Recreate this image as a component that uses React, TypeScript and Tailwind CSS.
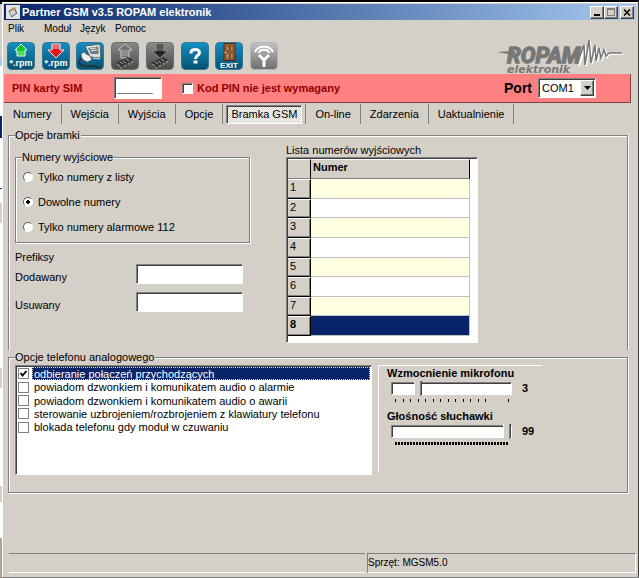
import { useState } from "react";
import type { ReactNode } from "react";

const TABS = ["Numery", "Wejścia", "Wyjścia", "Opcje", "Bramka GSM", "On-line", "Zdarzenia", "Uaktualnienie"];

const OUT_MODES = ["Tylko numery z listy", "Dowolne numery", "Tylko numery alarmowe 112"];

const PHONE_OPTIONS = [
  "odbieranie połączeń przychodzących",
  "powiadom dzwonkiem i komunikatem audio o alarmie",
  "powiadom dzwonkiem i komunikatem audio o awarii",
  "sterowanie uzbrojeniem/rozbrojeniem z klawiatury telefonu",
  "blokada telefonu gdy moduł w czuwaniu",
];

const MIC_TICKS = [0, 1, 2, 3, 4, 5, 6, 7, 8, 9, 10, 11, 12, 15];

const SUNKEN = "border border-t-[#808080] border-l-[#808080] border-r-white border-b-white shadow-[inset_1px_1px_0_#404040]";
const RAISED = "bg-[#d4d0c8] border border-t-white border-l-white border-r-[#404040] border-b-[#404040] shadow-[inset_-1px_-1px_0_#808080]";

/* ---------- toolbar icons, 28x28 ---------- */

function Tile({ kind, children }: { kind: "blue" | "gray" | "silver"; children: ReactNode }) {
  const top = { blue: "#1590c4", gray: "#8a8a8a", silver: "#c4c4c4" }[kind];
  const bottom = { blue: "#07506f", gray: "#4a4a4a", silver: "#6c6c6c" }[kind];
  const edge = { blue: "#2f7898", gray: "#6e6e6e", silver: "#b4b4b4" }[kind];
  return (
    <svg viewBox="0 0 28 28" className="block size-7">
      <defs>
        <linearGradient id={`tile-${kind}`} x1="0" y1="0" x2="0" y2="1">
          <stop offset="0" stopColor={top} />
          <stop offset="1" stopColor={bottom} />
        </linearGradient>
      </defs>
      <rect x="0.5" y="0.5" width="27" height="27" rx="4" fill={`url(#tile-${kind})`} stroke={edge} />
      {children}
    </svg>
  );
}

function Rpm() {
  return (
    <text x="14" y="24" textAnchor="middle" fontFamily="Liberation Sans, sans-serif" fontWeight="700" fontSize="9" fill="#fff">
      *.rpm
    </text>
  );
}

function Chip({ y }: { y: number }) {
  return (
    <g transform={`translate(0 ${y})`}>
      <path d="M5 6 L17 0 L22 3 L10 10 Z" fill="#333" />
      <path d="M6 7l3 2M9 5l3 2M12 4l3 2M15 2l3 2M10 10v2M14 8v2M18 6v2M21 4v2" stroke="#aaa" strokeWidth="1" />
    </g>
  );
}

const TOOLS: { name: string; icon: ReactNode }[] = [
  {
    name: "Otwórz",
    icon: (
      <Tile kind="blue">
        <path d="M14 2 L20 8 H18 V14 H10 V8 H8 Z" fill="#12c62c" stroke="#e8ffe8" strokeWidth="1" />
        <path d="M10 10H18M10 12H18" stroke="#e8ffe8" strokeWidth="0.6" />
        <Rpm />
      </Tile>
    ),
  },
  {
    name: "Zapisz",
    icon: (
      <Tile kind="blue">
        <path d="M10 2 H18 V8 H22 L14 16 L6 8 H10 Z" fill="#dc1420" stroke="#ffe4e4" strokeWidth="1" />
        <path d="M10 4H18M10 6H18" stroke="#ffe4e4" strokeWidth="0.8" />
        <Rpm />
      </Tile>
    ),
  },
  {
    name: "Połącz",
    icon: (
      <Tile kind="blue">
        <path d="M9 4 L24 2 L25 16 L14 15 Z" fill="#dcdcdc" stroke="#444" strokeWidth="0.8" />
        <path d="M12 6 L22 4.5 L22.5 12 L15 12 Z" fill="#6d797f" />
        <path d="M14 7l6-1M15 9l6-1M17 16l7 1" stroke="#fff" strokeWidth="0.9" />
        <path d="M5 12 L8 10 L10 12 L14 14 L16 18 L11 20 L6 17 Z" fill="#efefef" stroke="#555" strokeWidth="0.7" />
        <path d="M6 16 C0 20 4 25 13 24 C19 23 22 25 25 26" fill="none" stroke="#26333a" strokeWidth="1.8" />
      </Tile>
    ),
  },
  {
    name: "Odczytaj z modułu",
    icon: (
      <Tile kind="gray">
        <path d="M14 2 L21 8 H18 V16 H10 V8 H7 Z" fill="#737373" stroke="#c4c4c4" strokeWidth="1" />
        <path d="M10 9H18M10 11H18M10 13H18" stroke="#b4b4b4" strokeWidth="0.8" />
        <Chip y={15} />
      </Tile>
    ),
  },
  {
    name: "Zapisz do modułu",
    icon: (
      <Tile kind="gray">
        <path d="M10 2 H18 V9 H22 L14 16 L6 9 H10 Z" fill="#252525" stroke="#9c9c9c" strokeWidth="0.8" />
        <path d="M10 4H18M10 6H18M10 8H18" stroke="#aaa" strokeWidth="0.8" />
        <Chip y={15} />
      </Tile>
    ),
  },
  {
    name: "Pomoc",
    icon: (
      <Tile kind="blue">
        <path
          d="M10 11.5 V10.500 C10 8.500 12 7.500 14.500 7.500 C17 7.500 18.500 9 18.500 10.500 C18.500 13.500 14.500 13 14.500 17"
          fill="none"
          stroke="#fff"
          strokeWidth="3"
        />
        <rect x="12.500" y="18.500" width="4" height="3" fill="#fff" />
      </Tile>
    ),
  },
  {
    name: "Wyjście",
    icon: (
      <Tile kind="blue">
        <rect x="9" y="1.500" width="11" height="17" fill="#9a6038" stroke="#4b2a14" strokeWidth="1" />
        <path d="M11 4H14V9H11ZM15.500 4H18V9H15.500ZM11 11H14V17H11ZM15.500 11H18V17H15.500Z" fill="#c58d5c" stroke="#5b341b" strokeWidth="0.6" />
        <circle cx="10.500" cy="10.500" r="0.800" fill="#fff" />
        <text x="14" y="26" textAnchor="middle" fontFamily="Liberation Sans, sans-serif" fontWeight="700" fontSize="8" fill="#fff">
          EXIT
        </text>
      </Tile>
    ),
  },
  {
    name: "Zasięg",
    icon: (
      <Tile kind="silver">
        <path d="M5 10 C8 3 20 3 23 10M8.500 11 C10 6.500 18 6.500 19.500 11" fill="none" stroke="#fff" strokeWidth="2" />
        <path d="M9 13 L14 18 L19 13 M14 17 V25" fill="none" stroke="#fff" strokeWidth="3" />
      </Tile>
    ),
  },
];

function Logo() {
  return (
    <svg viewBox="0 0 126 36" className="block h-9 w-[126px]" role="img" aria-label="ROPAM elektronik">
      <g fill="none">
        <path
          d="M81 27 L87 7 L88 27 L92 2 L94 25 L98 7 L99 23 L102 10 L104 20 L107 12 L109 18 L112 15 L125 15"
          stroke="#fff"
          strokeWidth="2"
          transform="translate(1 1)"
        />
        <path d="M80 26 L87 7 L88 27 L92 2 L94 25 L98 7 L99 23 L102 10 L104 20 L107 12 L109 18 L112 15 L125 15" stroke="#777" strokeWidth="1.500" />
      </g>
      <path d="M0 14 L18 13 V17 Z" fill="#777" />
      <g fontStyle="italic" fontWeight="700" fill="#777">
        <text x="10" y="25" fontFamily="Roboto, sans-serif" fontSize="22" stroke="#777" strokeWidth="1.400">
          ROPAM
        </text>
        <text x="10" y="35" fontFamily="DejaVu Sans, sans-serif" fontSize="11">
          elektronik
        </text>
      </g>
    </svg>
  );
}

/* ---------- form parts ---------- */

function Group({ title, className, children }: { title: string; className: string; children: ReactNode }) {
  return (
    <fieldset className={`min-w-0 border-[#808080] ${className}`}>
      <legend className="ml-1.5 bg-[#d4d0c8] pr-px leading-[14px]">{title}</legend>
      {children}
    </fieldset>
  );
}

function Slider({ label, max, value, onChange, children }: {
  label: string;
  max: number;
  value: number;
  onChange: (v: number) => void;
  children: ReactNode;
}) {
  return (
    <label className="block pb-[7px] font-bold leading-[14px]">
      {label}
      <span className="mt-0.5 flex items-start gap-2.5 pl-1">
        <span className="block w-[121px]">
          <input
            type="range"
            min={0}
            max={max}
            value={value}
            onChange={(e) => onChange(Number(e.target.value))}
            className="relative block h-[13px] w-full appearance-none border border-t-[#808080] border-l-[#808080] border-r-white border-b-white bg-white shadow-[inset_1px_1px_0_#404040] [&::-webkit-slider-runnable-track]:h-[11px] [&::-webkit-slider-thumb]:-mt-0.5 [&::-webkit-slider-thumb]:h-[17px] [&::-webkit-slider-thumb]:w-2 [&::-webkit-slider-thumb]:appearance-none [&::-webkit-slider-thumb]:bg-[linear-gradient(to_right,#fff_1px,#d4d0c8_1px,#d4d0c8_6px,#808080_6px,#808080_7px,#404040_7px)] [&::-webkit-slider-thumb]:[clip-path:polygon(0_0,100%_0,100%_80%,50%_100%,0_80%)]"
          />
          {children}
        </span>
        <output className="leading-[13px]">{value}</output>
      </span>
    </label>
  );
}

/* sliver of the desktop behind the window */
function Backdrop() {
  return (
    <div className="flex w-0.5 shrink-0 flex-col bg-white" aria-hidden="true">
      <div className="h-1 bg-black" />
      <div className="h-[54px] bg-[#d4d0c8]" />
      <div className="h-2 bg-[#a6caf0]" />
      <div className="mt-[50px] h-[22px] bg-[#0a246a]" />
      <div className="mt-[50px] h-px bg-[#0a246a]" />
      <div className="mt-3.5 h-5 bg-[#d4d0c8]" />
      <div className="mt-[145px] h-5 bg-[#d4d0c8]" />
      <div className="mt-[98px] h-4 bg-[#d4d0c8]" />
      <div className="mt-9 flex-1 bg-[#b4a090]" />
    </div>
  );
}

export default function App() {
  const [tab, setTab] = useState(4);
  const [mode, setMode] = useState(1);
  const [checked, setChecked] = useState([true, false, false, false, false]);
  const [mic, setMic] = useState(3);
  const [volume, setVolume] = useState(99);

  return (
    <div className="flex min-h-screen font-['Liberation_Sans',sans-serif] text-[11px] leading-[14px] text-black">
      <Backdrop />
      <div className="flex min-w-0 flex-1 flex-col border-t-2 border-r border-b border-t-black border-r-[#404040] border-b-[#808080] bg-[#d4d0c8]">
        <div className="flex flex-1 flex-col border-t border-l border-white pt-px pl-px">
          {/* title bar */}
          <header className="mr-0.5 flex h-4 items-center gap-0.5 bg-linear-to-r from-[#0a246a] to-[#a6caf0] pr-0.5 pl-0.5">
            <svg viewBox="0 0 14 14" className="size-3.5">
              <rect width="14" height="14" fill="#e4e4e4" />
              <path d="M3 6 L8 3 L11 8 L6 12 Z" fill="#bbb" stroke="#666" />
              <path d="M7 6l1 3M5 7l1 3" stroke="#fff" />
              <path d="M8 2 L10 3 L9 5 L7 4 Z" fill="#e08a2a" />
            </svg>
            <h1 className="flex-1 font-bold text-white">Partner GSM v3.5 ROPAM elektronik</h1>
            <div className="flex">
              <button aria-label="Minimalizuj" className={`flex h-[13px] w-3.5 items-end justify-center pb-0.5 ${RAISED}`}>
                <span className="block h-0.5 w-1.5 bg-black" />
              </button>
              <button aria-label="Maksymalizuj" className={`flex h-[13px] w-3.5 items-center justify-center ${RAISED}`}>
                <span className="block size-2 border border-t-2 border-[#808080]" />
              </button>
              <button aria-label="Zamknij" className={`ml-0.5 flex h-[13px] w-3.5 items-center justify-center ${RAISED}`}>
                <svg viewBox="0 0 8 7" className="h-[7px] w-2">
                  <path d="M1 0.500 L7 6.500 M7 0.500 L1 6.500" stroke="#000" strokeWidth="1.500" />
                </svg>
              </button>
            </div>
          </header>

          <nav className="flex h-[18px] items-center pl-1 text-[10px]">
            <button className="w-9 text-left">Plik</button>
            <button className="w-9 text-left">Moduł</button>
            <button className="w-[35px] text-left">Język</button>
            <button>Pomoc</button>
          </nav>

          <div className="flex h-9 items-center justify-between pr-[15px] pl-[3px]">
            <div className="flex w-[271px] justify-between">
              {TOOLS.map((t) => (
                <button key={t.name} aria-label={t.name}>
                  {t.icon}
                </button>
              ))}
            </div>
            <Logo />
          </div>

          {/* SIM / port bar */}
          <div className="mr-[7px] flex h-[29px] items-center border-r border-b border-[#804040] bg-[#ff8080] pr-[34px] pl-2 font-bold text-[#900000]">
            <label htmlFor="pin" className="w-[102px]">PIN karty SIM</label>
            <input
              id="pin"
              defaultValue="____"
              className={`h-[22px] w-12 bg-white pb-0.5 pl-0.5 text-[16px] leading-[16px] font-bold text-black ${SUNKEN}`}
            />
            <label className="ml-5 flex items-center gap-1">
              <input type="checkbox" className={`size-[11px] appearance-none bg-white checked:bg-[#404040] ${SUNKEN}`} />
              Kod PIN nie jest wymagany
            </label>
            <label htmlFor="port" className="mr-1.5 ml-auto text-[14px] text-black">Port</label>
            <div className="relative">
              <select
                id="port"
                className={`block h-5 w-[58px] appearance-none bg-white pl-[3px] text-[11px] font-normal text-black ${SUNKEN}`}
              >
                <option>COM1</option>
                <option>COM2</option>
              </select>
              <span className={`pointer-events-none absolute top-0.5 right-0.5 flex h-4 w-3.5 items-center justify-center ${RAISED}`}>
                <svg viewBox="0 0 7 4" className="h-1 w-[7px]">
                  <path d="M0 0 H7 L3.500 4 Z" />
                </svg>
              </span>
            </div>
          </div>

          {/* tabs */}
          <div className="flex h-[22px] items-center" role="tablist">
            {TABS.map((name, i) => (
              <div key={name} className="flex h-5 items-center border-r border-[#808080] px-[3px]">
                <button
                  role="tab"
                  aria-selected={tab === i}
                  onClick={() => setTab(i)}
                  className={
                    tab === i
                      ? `h-[19px] bg-[conic-gradient(#fff_25%,#d4d0c8_0_50%,#fff_0_75%,#d4d0c8_0)] bg-size-[2px_2px] px-1 ${SUNKEN}`
                      : "h-[19px] px-1.5"
                  }
                >
                  {name}
                </button>
              </div>
            ))}
          </div>

          <main className="mt-[3px] mr-[10px] ml-1">
            <Group title="Opcje bramki" className="border-x border-t pb-[7px] shadow-[1px_0_0_#fff,inset_1px_1px_0_#fff]">
              <div className="flex gap-9 pl-1.5">
                <div className="w-[235px] pt-2">
                  <Group title="Numery wyjściowe" className="border pb-[3px] shadow-[1px_1px_0_#fff,inset_1px_1px_0_#fff]">
                    {OUT_MODES.map((m, i) => (
                      <label key={m} className="flex h-[25px] items-center gap-[5px] pl-[7px]">
                        <input
                          type="radio"
                          name="mode"
                          checked={mode === i}
                          onChange={() => setMode(i)}
                          className="size-2.5 appearance-none rounded-full border border-t-[#606060] border-l-[#606060] border-r-white border-b-white bg-white checked:bg-[radial-gradient(#000_2px,#fff_2px)]"
                        />
                        {m}
                      </label>
                    ))}
                  </Group>
                  <p className="mt-[7px]">Prefiksy</p>
                  <label className="flex items-end">
                    <span className="w-[121px]">Dodawany</span>
                    <input className={`h-5 w-[107px] bg-white px-1 ${SUNKEN}`} />
                  </label>
                  <label className="mt-2 flex items-end">
                    <span className="w-[121px]">Usuwany</span>
                    <input className={`h-5 w-[107px] bg-white px-1 ${SUNKEN}`} />
                  </label>
                </div>

                <div className="w-48 pt-px">
                  <p id="out-list">Lista numerów wyjściowych</p>
                  <div className={`h-[186px] bg-white pt-px pl-px ${SUNKEN}`}>
                    <table aria-labelledby="out-list" className="h-[177px] w-[182px] border-separate border-spacing-0 text-left">
                      <thead>
                        <tr className="h-5">
                          <th className="w-[23px] border-t border-r border-b border-t-white border-r-black border-b-[#808080] bg-[#d4d0c8]" />
                          <th className="border-t border-r border-b border-t-white border-r-black border-b-[#808080] bg-[#d4d0c8] p-0 pl-0.5 align-top">Numer</th>
                        </tr>
                      </thead>
                      <tbody>
                        {[1, 2, 3, 4, 5, 6, 7, 8].map((n) => (
                          <tr key={n} className="group odd:bg-[#ffffe1] last:bg-[#0a246a]">
                            <th className="border-t border-r border-b border-t-white border-r-black border-b-black bg-[#d4d0c8] p-0 pl-0.5 align-top font-normal shadow-[inset_-1px_-1px_0_#808080] group-last:font-bold">
                              {n}
                            </th>
                            <td className="border-r border-b border-[#c0c0c0] p-0" />
                          </tr>
                        ))}
                      </tbody>
                    </table>
                  </div>
                </div>
              </div>
            </Group>

            <Group title="Opcje telefonu analogowego" className="border pb-[17px] shadow-[1px_1px_0_#fff,inset_1px_1px_0_#fff]">
              <div className="flex gap-1.5 pt-px pl-1.5">
                <div className={`h-[110px] w-[357px] bg-white p-px ${SUNKEN}`}>
                  <div className="grid h-[67px] grid-rows-5">
                    {PHONE_OPTIONS.map((o, i) => (
                      <label key={o} className="relative flex items-center gap-[3px] pl-px">
                        <input
                          type="checkbox"
                          checked={checked[i]}
                          onChange={() => setChecked(checked.map((c, k) => (k === i ? !c : c)))}
                          className="peer size-[11px] shrink-0 appearance-none border border-[#808080] bg-white"
                        />
                        <span className="flex h-full flex-1 items-center border border-dotted border-transparent pl-px peer-checked:border-[#f5db95] peer-checked:bg-[#0a246a] peer-checked:text-white">
                          {o}
                        </span>
                        <svg viewBox="0 0 11 13" className="pointer-events-none absolute top-0 left-px hidden h-[13px] w-[11px] peer-checked:block">
                          <path d="M2.500 6 L4.500 8.500 L8.500 4" fill="none" stroke="#000" strokeWidth="1.800" />
                        </svg>
                      </label>
                    ))}
                  </div>
                </div>

                <div className="h-[107px] w-[164px] border-t border-l border-white pl-2">
                  <Slider label="Wzmocnienie mikrofonu" max={15} value={mic} onChange={setMic}>
                    <svg viewBox="0 0 121 3" className="mt-1 block h-[3px] w-full">
                      {MIC_TICKS.map((t) => (
                        <rect key={t} x={Math.round(4 + t * 7.5)} y="0" width="1" height="3" />
                      ))}
                    </svg>
                  </Slider>
                  <Slider label="Głośność słuchawki" max={99} value={volume} onChange={setVolume}>
                    <svg viewBox="0 0 121 3" className="mt-1 block h-[3px] w-full">
                      <path d="M4 1.500 H118" stroke="#000" strokeWidth="3" strokeDasharray="2 1" />
                    </svg>
                  </Slider>
                </div>
              </div>
            </Group>
          </main>

          <footer className="mt-auto mr-0.5 mb-1 ml-[5px] flex h-5 gap-0.5 text-[10px]">
            <div className="w-[356px] border-t border-b border-t-[#808080] border-b-white" />
            <div className="flex flex-1 items-center border border-t-[#808080] border-l-[#808080] border-r-white border-b-white">
              Sprzęt: MGSM5.0
            </div>
          </footer>
        </div>
      </div>
    </div>
  );
}
